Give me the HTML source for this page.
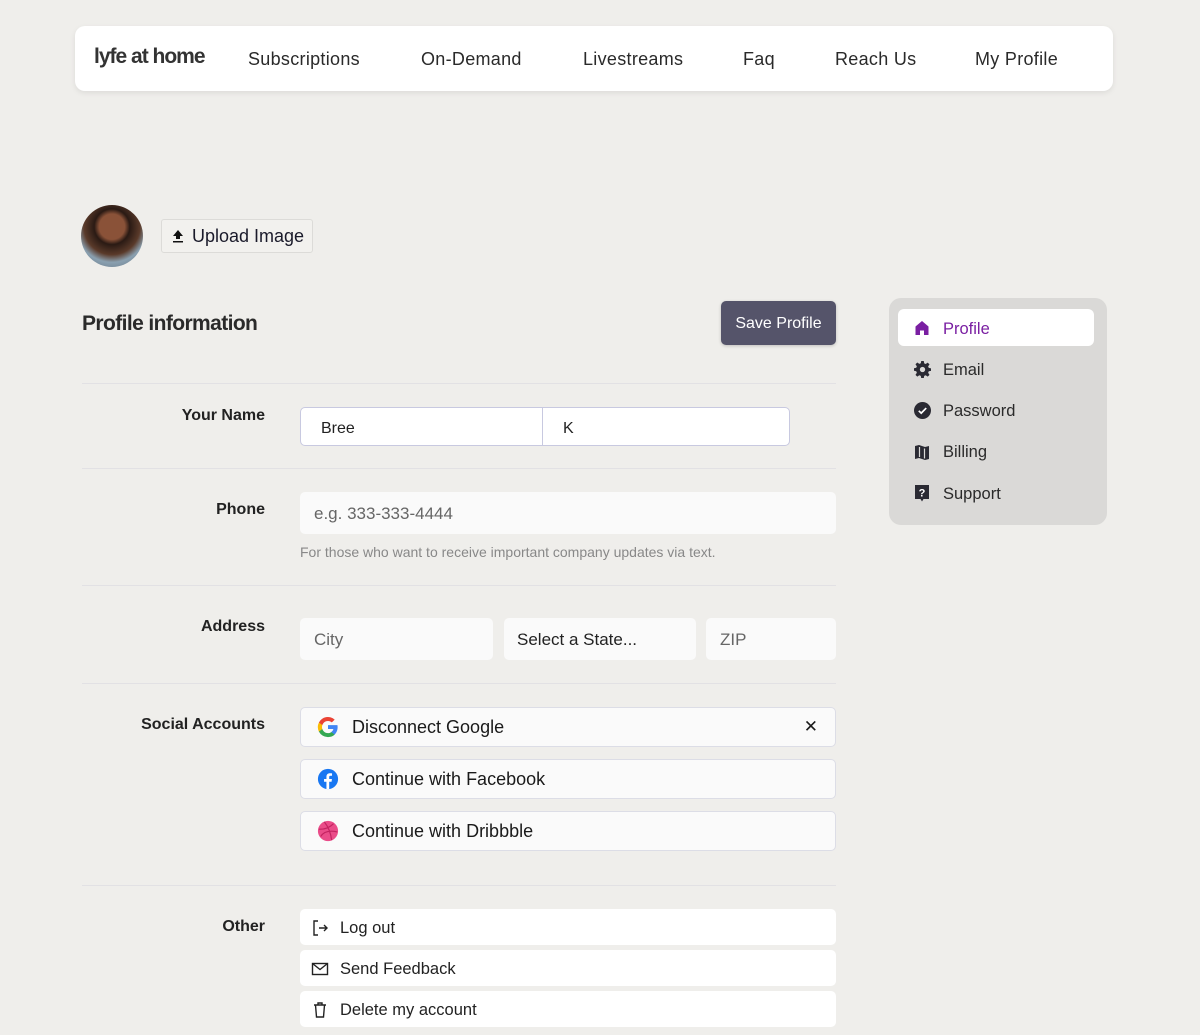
<!DOCTYPE html>
<html><head><meta charset="utf-8"><style>
*{box-sizing:border-box;margin:0;padding:0}
body{width:1200px;height:1035px;overflow:hidden;background:#efeeeb;font-family:"Liberation Sans",sans-serif;color:#222;position:relative}
.a{position:absolute}
.nav{left:75px;top:26px;width:1038px;height:65px;background:#fff;border-radius:10px;box-shadow:0 2px 6px rgba(0,0,0,.08)}
.nav span{position:absolute;top:23px;font-size:18px;color:#2a2a2a;letter-spacing:.3px}
.div{left:82px;width:754px;height:1px;background:#e2e1e4}
.lbl{right:935px;font-size:16px;font-weight:bold;color:#222}
.inp{background:#fafafa;border-radius:5px;font-size:17px;color:#666;padding-left:14px;display:flex;align-items:center}
.soc{left:300px;width:536px;height:40px;background:#fafafa;border:1px solid #dcdde6;border-radius:5px;display:flex;align-items:center;font-size:18px;color:#1a1a1a}
.soc svg{margin:0 13px 0 16px}
.oth{left:300px;width:536px;height:36px;background:#fff;border-radius:5px;display:flex;align-items:center;font-size:16.5px;color:#222;padding-top:2px}
.oth svg{margin:0 11px 0 11px}
.side span{position:absolute;left:54px;font-size:16.5px;color:#2a2a2a}
.side svg{position:absolute;left:25px}
</style></head><body>
<div class="a nav">
<span style="left:19px;top:19px;font-weight:bold;font-size:21px;letter-spacing:-1px;color:#333">lyfe at home</span>
<span style="left:173px">Subscriptions</span>
<span style="left:346px">On-Demand</span>
<span style="left:508px">Livestreams</span>
<span style="left:668px">Faq</span>
<span style="left:760px">Reach Us</span>
<span style="left:900px">My Profile</span>
</div>
<div class="a" style="left:81px;top:205px;width:62px;height:62px;border-radius:50%;background:radial-gradient(circle at 50% 35%,#8a5238 0 25%,#2a1a14 35%,#5a3a2a 55%,#8aa0b0 70%,#607080 100%)"></div>
<div class="a" style="left:161px;top:219px;width:152px;height:34px;border:1px solid #dcdbd8;border-radius:3px;background:#f2f1ee;font-size:18px;color:#1a1a2a;display:flex;align-items:center;padding-left:10px">
<svg width="12" height="14" viewBox="0 0 12 14"><path d="M6 1L1 7h3v3h4V7h3z M1 12h10v1.5H1z" fill="#111"/></svg><span style="margin-left:8px">Upload Image</span></div>
<div class="a" style="left:82px;top:312px;font-size:21px;font-weight:bold;letter-spacing:-.6px;color:#2a2a2a">Profile information</div>
<div class="a" style="left:721px;top:301px;width:115px;height:44px;background:#55546a;border-radius:5px;color:#fff;font-size:16px;display:flex;align-items:center;justify-content:center;padding-top:2px;box-shadow:0 1px 3px rgba(0,0,0,.2)">Save Profile</div>
<div class="a div" style="top:383px"></div>
<div class="a div" style="top:468px"></div>
<div class="a div" style="top:585px"></div>
<div class="a div" style="top:683px"></div>
<div class="a div" style="top:885px"></div>
<div class="a lbl" style="top:407px">Your Name</div>
<div class="a lbl" style="top:501px">Phone</div>
<div class="a lbl" style="top:618px">Address</div>
<div class="a lbl" style="top:716px">Social Accounts</div>
<div class="a lbl" style="top:918px">Other</div>
<div class="a" style="left:300px;top:407px;width:490px;height:39px;background:#fff;border:1px solid #c8c9e0;border-radius:5px;font-size:16px;color:#222">
<span style="position:absolute;left:20px;top:12px">Bree</span>
<div style="position:absolute;left:241px;top:0;width:1px;height:37px;background:#c8c9e0"></div>
<span style="position:absolute;left:262px;top:12px">K</span></div>
<div class="a inp" style="left:300px;top:492px;width:536px;height:42px;padding-top:2px">e.g. 333-333-4444</div>
<div class="a" style="left:300px;top:544px;font-size:14px;color:#888">For those who want to receive important company updates via text.</div>
<div class="a inp" style="left:300px;top:618px;width:193px;height:42px;padding-top:2px">City</div>
<div class="a inp" style="left:504px;top:618px;width:192px;height:42px;color:#222;padding-left:13px;padding-top:2px">Select a State...</div>
<div class="a inp" style="left:706px;top:618px;width:130px;height:42px;padding-top:2px">ZIP</div>
<div class="a soc" style="top:707px"><svg width="22" height="22" viewBox="0 0 24 24"><path d="M22.5 12.2c0-.8-.1-1.5-.2-2.2H12v4.2h5.9a5 5 0 0 1-2.2 3.3v2.7h3.6c2-1.9 3.2-4.7 3.2-8z" fill="#4285F4"/><path d="M12 23c3 0 5.5-1 7.3-2.7l-3.6-2.7c-1 .7-2.2 1.1-3.7 1.1-2.9 0-5.3-1.9-6.2-4.5H2.1v2.8A11 11 0 0 0 12 23z" fill="#34A853"/><path d="M5.8 14.2a6.6 6.6 0 0 1 0-4.3V7.1H2.1a11 11 0 0 0 0 9.9z" fill="#FBBC05"/><path d="M12 5.4c1.6 0 3 .6 4.2 1.6l3.1-3.1A11 11 0 0 0 2.1 7.1l3.7 2.8C6.7 7.3 9.1 5.4 12 5.4z" fill="#EA4335"/></svg>Disconnect Google<span style="position:absolute;right:17px;font-size:17px">✕</span></div>
<div class="a soc" style="top:759px"><svg width="22" height="22" viewBox="0 0 24 24"><circle cx="12" cy="12" r="11" fill="#1877F2"/><path d="M13.3 23v-8h2.6l.4-3h-3V10c0-.9.3-1.5 1.6-1.5h1.5V5.8c-.3 0-1.2-.1-2.3-.1-2.3 0-3.8 1.4-3.8 3.9V12H7.7v3h2.6v8z" fill="#fff"/></svg>Continue with Facebook</div>
<div class="a soc" style="top:811px"><svg width="22" height="22" viewBox="0 0 24 24"><circle cx="12" cy="12" r="11" fill="#EA4C89"/><path d="M2 10c5 .3 11-1 16-6M4 18c3-5 9-7 18-5M8 2c4 5 7 12 8 20" stroke="#c32361" stroke-width="1.3" fill="none"/></svg>Continue with Dribbble</div>
<div class="a oth" style="top:909px"><svg width="18" height="18" viewBox="0 0 18 18" fill="none" stroke="#222" stroke-width="1.4"><path d="M7 2H3v14h4M8 9h8M13 6l3 3-3 3"/></svg>Log out</div>
<div class="a oth" style="top:950px"><svg width="18" height="18" viewBox="0 0 18 18" fill="none" stroke="#222" stroke-width="1.4"><rect x="1.5" y="3.5" width="15" height="11"/><path d="M1.5 3.5l7.5 6 7.5-6"/></svg>Send Feedback</div>
<div class="a oth" style="top:991px"><svg width="18" height="18" viewBox="0 0 18 18" fill="none" stroke="#222" stroke-width="1.4"><path d="M3 4h12M7 4V2h4v2M4.5 4l1 12h7l1-12"/></svg>Delete my account</div>
<div class="a side" style="left:889px;top:298px;width:218px;height:227px;background:#dad9d7;border-radius:12px">
<div style="position:absolute;left:9px;top:11px;width:196px;height:37px;background:#fff;border-radius:6px"></div>
<svg style="top:22px" width="16" height="16" viewBox="0 0 16 16"><path d="M8 1L1.5 6.5V15h4.5v-4.5h4V15h4.5V6.5z" fill="#7a1fa2"/></svg><span style="top:22px;color:#7a1fa2">Profile</span>
<svg style="top:63px" width="17" height="17" viewBox="0 0 16 16"><path d="M6.8 0h2.4l.4 2.2 1.4.6 1.9-1.3 1.7 1.7-1.3 1.9.6 1.4 2.1.4v2.4l-2.1.4-.6 1.4 1.3 1.9-1.7 1.7-1.9-1.3-1.4.6-.4 2.2H6.8l-.4-2.2-1.4-.6-1.9 1.3-1.7-1.7 1.3-1.9-.6-1.4L0 9.2V6.8l2.1-.4.6-1.4-1.3-1.9 1.7-1.7 1.9 1.3 1.4-.6z M8 5.5a2.5 2.5 0 1 0 0 5 2.5 2.5 0 0 0 0-5z" fill="#2a2a33" fill-rule="evenodd"/></svg><span style="top:63px">Email</span>
<svg style="top:104px" width="17" height="17" viewBox="0 0 16 16"><circle cx="8" cy="8" r="8" fill="#2a2a33"/><path d="M4.5 8.3l2.3 2.2 4.7-4.8" stroke="#fff" stroke-width="1.6" fill="none"/></svg><span style="top:104px">Password</span>
<svg style="top:146px" width="16" height="16" viewBox="0 0 16 16"><path d="M1 2l4 -1 6 2 4-1v13l-4 1-6-2-4 1z" fill="#2a2a33"/><path d="M5.5 3v10M10.5 4.5v10" stroke="#dad9d7" stroke-width="1.2"/></svg><span style="top:145px">Billing</span>
<svg style="top:187px" width="16" height="17" viewBox="0 0 16 17"><path d="M1 0h14v14H9.5L8 16.5 6.5 14H1z" fill="#2a2a33"/><text x="8" y="11.5" font-size="11" font-weight="bold" fill="#fff" text-anchor="middle" font-family="Liberation Sans">?</text></svg><span style="top:187px">Support</span>
</div>
</body></html>
